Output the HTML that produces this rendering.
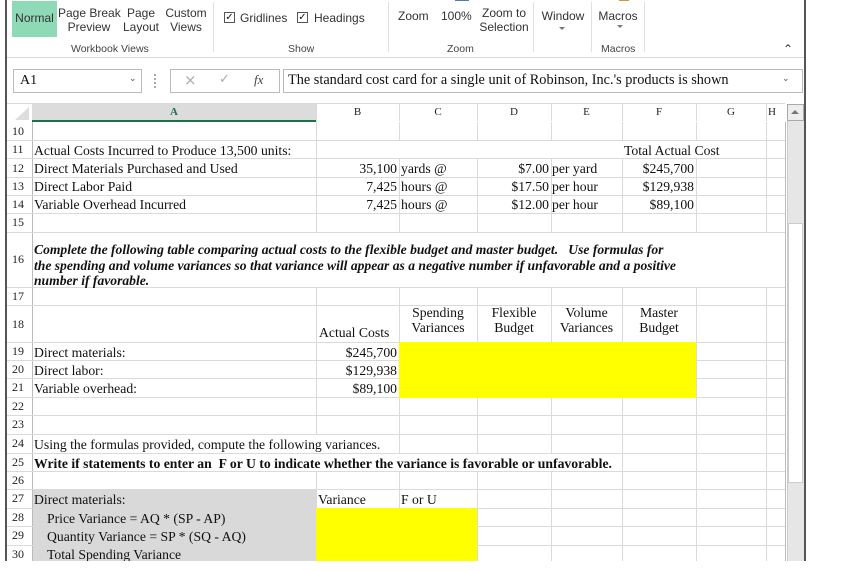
<!DOCTYPE html>
<html><head><meta charset="utf-8"><style>
*{margin:0;padding:0;box-sizing:border-box}
body{width:854px;height:571px;overflow:hidden;background:#fff;position:relative;font-family:"Liberation Serif",serif;color:#111}
.a{position:absolute}
.rb{font-family:"Liberation Sans",sans-serif;font-size:12px;color:#333;position:absolute;text-align:center;line-height:14px;white-space:nowrap}
.gl{font-family:"Liberation Sans",sans-serif;font-size:10.5px;color:#444;position:absolute;white-space:nowrap}
.h{position:absolute;height:1px;background:#dadada}
.v{position:absolute;width:1px;background:#dadada}
.t{position:absolute;font-size:13.7px;white-space:nowrap;line-height:15px}
.r{text-align:right}
.rn{position:absolute;left:12px;font-size:12px;line-height:14px;color:#222}
.ch{position:absolute;top:104px;height:17px;font-size:11px;text-align:center;line-height:17px;color:#222}
</style></head><body>
<div class="a" style="left:5px;top:0;width:2px;height:561px;background:#555"></div>
<div class="a" style="left:804px;top:0;width:2px;height:561px;background:#555"></div>

<div class="a" style="left:12px;top:1px;width:45px;height:36px;background:#8fdab6"></div>
<div class="rb" style="left:12px;top:11px;width:45px">Normal</div>
<div class="rb" style="left:58px;top:6px;width:62px">Page Break<br>Preview</div>
<div class="rb" style="left:121px;top:6px;width:40px">Page<br>Layout</div>
<div class="rb" style="left:164px;top:6px;width:44px">Custom<br>Views</div>
<div class="gl" style="left:71px;top:43px">Workbook Views</div>
<div class="a" style="left:213px;top:2px;width:1px;height:50px;background:#e0e0e0"></div>
<div class="a" style="left:224px;top:12px;width:11px;height:11px;border:1px solid #555;font-size:10px;line-height:9px;text-align:center;font-family:'DejaVu Sans'">✓</div>
<div class="rb" style="left:240px;top:11px">Gridlines</div>
<div class="a" style="left:297px;top:12px;width:11px;height:11px;border:1px solid #555;font-size:10px;line-height:9px;text-align:center;font-family:'DejaVu Sans'">✓</div>
<div class="rb" style="left:314px;top:11px">Headings</div>
<div class="gl" style="left:288px;top:43px">Show</div>
<div class="a" style="left:388px;top:2px;width:1px;height:50px;background:#e0e0e0"></div>
<div class="rb" style="left:398px;top:9px">Zoom</div>
<div class="rb" style="left:441px;top:9px">100%</div>
<div class="a" style="left:455px;top:0;width:14px;height:1px;background:#4a7ac0"></div>
<div class="rb" style="left:478px;top:6px;width:52px">Zoom to<br>Selection</div>
<div class="gl" style="left:447px;top:43px">Zoom</div>
<div class="a" style="left:533px;top:2px;width:1px;height:50px;background:#e0e0e0"></div>
<div class="rb" style="left:539px;top:9px;width:48px">Window</div>
<div class="a" style="left:559px;top:27px;border:3px solid transparent;border-top:3px solid #777"></div>
<div class="a" style="left:591px;top:2px;width:1px;height:50px;background:#e0e0e0"></div>
<div class="rb" style="left:596px;top:9px;width:44px">Macros</div>
<div class="a" style="left:617px;top:25px;border:3px solid transparent;border-top:3px solid #777"></div>
<div class="a" style="left:619px;top:0;width:10px;height:1px;background:#e8903c"></div>
<div class="gl" style="left:601px;top:43px">Macros</div>
<div class="a" style="left:644px;top:2px;width:1px;height:50px;background:#e0e0e0"></div>
<div class="rb" style="left:783px;top:42px;font-size:12px">&#8963;</div>
<div class="a" style="left:7px;top:57px;width:797px;height:1px;background:#d8d8d8"></div>

<div class="a" style="left:13px;top:69px;width:129px;height:24px;border:1px solid #bbb"></div>
<div class="t" style="left:20px;top:73px;font-size:14px">A1</div>
<div class="a" style="left:129px;top:74px;font-size:9px;color:#555;font-family:'DejaVu Sans'">&#8964;</div>
<div class="a" style="left:154px;top:74px;width:2px;height:14px;border-left:2px dotted #aaa"></div>
<div class="a" style="left:170px;top:69px;width:110px;height:24px;border:1px solid #bbb"></div>
<div class="a" style="left:184px;top:71px;font-size:15px;color:#aaa;font-family:'DejaVu Sans'">×</div>
<div class="a" style="left:219px;top:72px;font-size:13px;color:#aaa;font-family:'DejaVu Sans'">✓</div>
<div class="a" style="left:254px;top:72px;font-size:13px;font-style:italic;color:#444">fx</div>
<div class="a" style="left:283px;top:69px;width:520px;height:24px;border:1px solid #bbb"></div>
<div class="t" style="left:288px;top:73px;font-size:14.3px">The standard cost card for a single unit of Robinson, Inc.'s products is shown</div>
<div class="a" style="left:782px;top:74px;font-size:9px;color:#555;font-family:'DejaVu Sans'">&#8964;</div>

<div class="a" style="left:7px;top:103px;width:778px;height:1px;background:#dadada"></div>
<div class="a" style="left:15px;top:107px;border-left:14px solid transparent;border-bottom:13px solid #ddd"></div>
<div class="a" style="left:32px;top:104px;width:284px;height:17px;background:#dcdcdc"></div>
<div class="a" style="left:32px;top:120px;width:284px;height:2px;background:#1e7145"></div>
<div class="ch" style="left:32px;width:284px;color:#1e7145;font-weight:bold">A</div>
<div class="ch" style="left:316px;width:83px">B</div>
<div class="ch" style="left:399px;width:78px">C</div>
<div class="ch" style="left:477px;width:74px">D</div>
<div class="ch" style="left:551px;width:71px">E</div>
<div class="ch" style="left:622px;width:74px">F</div>
<div class="ch" style="left:696px;width:70px">G</div>
<div class="ch" style="left:766px;width:12px">H</div>
<div class="v" style="left:399px;top:104px;height:17px"></div>
<div class="v" style="left:477px;top:104px;height:17px"></div>
<div class="v" style="left:551px;top:104px;height:17px"></div>
<div class="v" style="left:622px;top:104px;height:17px"></div>
<div class="v" style="left:696px;top:104px;height:17px"></div>
<div class="v" style="left:766px;top:104px;height:17px"></div>

<div class="a" style="left:787px;top:104px;width:17px;height:457px;background:#e6e6e6;border-left:1px solid #ccc"></div>
<div class="a" style="left:787px;top:104px;width:17px;height:17px;border:1px solid #aaa;background:#eee"></div>
<div class="a" style="left:791px;top:110px;border:4px solid transparent;border-bottom:4px solid #777;border-top:0"></div>
<div class="a" style="left:788px;top:223px;width:15px;height:260px;background:#fff;border:1px solid #ccc"></div>

<div class="v" style="left:32px;top:122px;height:439px;background:#bbb"></div>
<div class="v" style="left:316px;top:104px;height:457px"></div>
<div class="v" style="left:399px;top:122px;height:439px"></div>
<div class="v" style="left:477px;top:122px;height:439px"></div>
<div class="v" style="left:551px;top:122px;height:439px"></div>
<div class="v" style="left:622px;top:122px;height:439px"></div>
<div class="v" style="left:696px;top:122px;height:439px"></div>
<div class="v" style="left:766px;top:122px;height:439px"></div>
<div class="v" style="left:785px;top:122px;height:439px;background:#bbb"></div>

<div class="h" style="left:7px;top:140px;width:778px"></div>
<div class="h" style="left:7px;top:158px;width:778px"></div>
<div class="h" style="left:7px;top:177px;width:778px"></div>
<div class="h" style="left:7px;top:195px;width:778px"></div>
<div class="h" style="left:7px;top:213px;width:778px"></div>
<div class="h" style="left:7px;top:232px;width:778px"></div>
<div class="h" style="left:7px;top:287px;width:778px"></div>
<div class="h" style="left:7px;top:305px;width:778px"></div>
<div class="h" style="left:7px;top:342px;width:778px"></div>
<div class="h" style="left:7px;top:360px;width:778px"></div>
<div class="h" style="left:7px;top:378px;width:778px"></div>
<div class="h" style="left:7px;top:397px;width:778px"></div>
<div class="h" style="left:7px;top:415px;width:778px"></div>
<div class="h" style="left:7px;top:434px;width:778px"></div>
<div class="h" style="left:7px;top:453px;width:778px"></div>
<div class="h" style="left:7px;top:471px;width:778px"></div>
<div class="h" style="left:7px;top:489px;width:778px"></div>
<div class="h" style="left:7px;top:508px;width:778px"></div>
<div class="h" style="left:7px;top:526px;width:778px"></div>
<div class="h" style="left:7px;top:545px;width:778px"></div>

<!-- overflow covers -->
<div class="a" style="left:33px;top:233px;width:752px;height:54px;background:#fff"></div>
<div class="a" style="left:33px;top:435px;width:365px;height:18px;background:#fff"></div>
<div class="a" style="left:33px;top:454px;width:588px;height:17px;background:#fff"></div>
<div class="a" style="left:317px;top:141px;width:448px;height:17px;background:#fff"></div>

<!-- fills (on top of grid) -->
<div class="a" style="left:399px;top:342px;width:297px;height:56px;background:#ffff00"></div>
<div class="a" style="left:33px;top:489px;width:283px;height:72px;background:#d9d9d9"></div>
<div class="a" style="left:316px;top:508px;width:161px;height:53px;background:#ffff00"></div>
<div class="h" style="left:7px;top:397px;width:26px"></div>

<div class="a" style="left:0;top:561px;width:854px;height:10px;background:#fff"></div>

<div class="rn" style="top:124px">10</div>
<div class="rn" style="top:142px">11</div>
<div class="rn" style="top:161px">12</div>
<div class="rn" style="top:179px">13</div>
<div class="rn" style="top:197px">14</div>
<div class="rn" style="top:215px">15</div>
<div class="rn" style="top:252px">16</div>
<div class="rn" style="top:289px">17</div>
<div class="rn" style="top:317px">18</div>
<div class="rn" style="top:344px">19</div>
<div class="rn" style="top:362px">20</div>
<div class="rn" style="top:380px">21</div>
<div class="rn" style="top:399px">22</div>
<div class="rn" style="top:417px">23</div>
<div class="rn" style="top:436px">24</div>
<div class="rn" style="top:455px">25</div>
<div class="rn" style="top:473px">26</div>
<div class="rn" style="top:491px">27</div>
<div class="rn" style="top:510px">28</div>
<div class="rn" style="top:528px">29</div>
<div class="rn" style="top:547px">30</div>

<div class="t" style="left:34px;top:143px">Actual Costs Incurred to Produce 13,500 units:</div>
<div class="t" style="left:624px;top:143px">Total Actual Cost</div>
<div class="t" style="left:34px;top:161px">Direct Materials Purchased and Used</div>
<div class="t" style="left:34px;top:179px">Direct Labor Paid</div>
<div class="t" style="left:34px;top:197px">Variable Overhead Incurred</div>
<div class="t r" style="left:316px;width:81px;top:161px">35,100</div>
<div class="t r" style="left:316px;width:81px;top:179px">7,425</div>
<div class="t r" style="left:316px;width:81px;top:197px">7,425</div>
<div class="t" style="left:401px;top:161px">yards @</div>
<div class="t" style="left:401px;top:179px">hours @</div>
<div class="t" style="left:401px;top:197px">hours @</div>
<div class="t r" style="left:477px;width:72px;top:161px">$7.00</div>
<div class="t r" style="left:477px;width:72px;top:179px">$17.50</div>
<div class="t r" style="left:477px;width:72px;top:197px">$12.00</div>
<div class="t" style="left:552px;top:161px">per yard</div>
<div class="t" style="left:552px;top:179px">per hour</div>
<div class="t" style="left:552px;top:197px">per hour</div>
<div class="t r" style="left:622px;width:72px;top:161px">$245,700</div>
<div class="t r" style="left:622px;width:72px;top:179px">$129,938</div>
<div class="t r" style="left:622px;width:72px;top:197px">$89,100</div>

<div class="t" style="left:34px;top:242px;font-weight:bold;font-style:italic;font-size:13.6px;line-height:15.5px">Complete the following table comparing actual costs to the flexible budget and master budget.&nbsp;&nbsp; Use formulas for<br>the spending and volume variances so that variance will appear as a negative number if unfavorable and a positive<br>number if favorable.</div>

<div class="t" style="left:319px;top:325px">Actual Costs</div>
<div class="t" style="left:399px;width:78px;top:305px;text-align:center">Spending<br>Variances</div>
<div class="t" style="left:477px;width:74px;top:305px;text-align:center">Flexible<br>Budget</div>
<div class="t" style="left:551px;width:71px;top:305px;text-align:center">Volume<br>Variances</div>
<div class="t" style="left:622px;width:74px;top:305px;text-align:center">Master<br>Budget</div>

<div class="t" style="left:34px;top:345px">Direct materials:</div>
<div class="t" style="left:34px;top:363px">Direct labor:</div>
<div class="t" style="left:34px;top:381px">Variable overhead:</div>
<div class="t r" style="left:316px;width:81px;top:345px">$245,700</div>
<div class="t r" style="left:316px;width:81px;top:363px">$129,938</div>
<div class="t r" style="left:316px;width:81px;top:381px">$89,100</div>

<div class="t" style="left:34px;top:437px">Using the formulas provided, compute the following variances.</div>
<div class="t" style="left:34px;top:456px;font-weight:bold">Write if statements to enter an&nbsp; F or U to indicate whether the variance is favorable or unfavorable.</div>

<div class="t" style="left:34px;top:492px">Direct materials:</div>
<div class="t" style="left:318px;top:492px">Variance</div>
<div class="t" style="left:401px;top:492px">F or U</div>
<div class="t" style="left:47px;top:511px">Price Variance = AQ * (SP - AP)</div>
<div class="t" style="left:47px;top:529px">Quantity Variance = SP * (SQ - AQ)</div>
<div class="t" style="left:47px;top:547px;height:14px;overflow:hidden">Total Spending Variance</div>
</body></html>
